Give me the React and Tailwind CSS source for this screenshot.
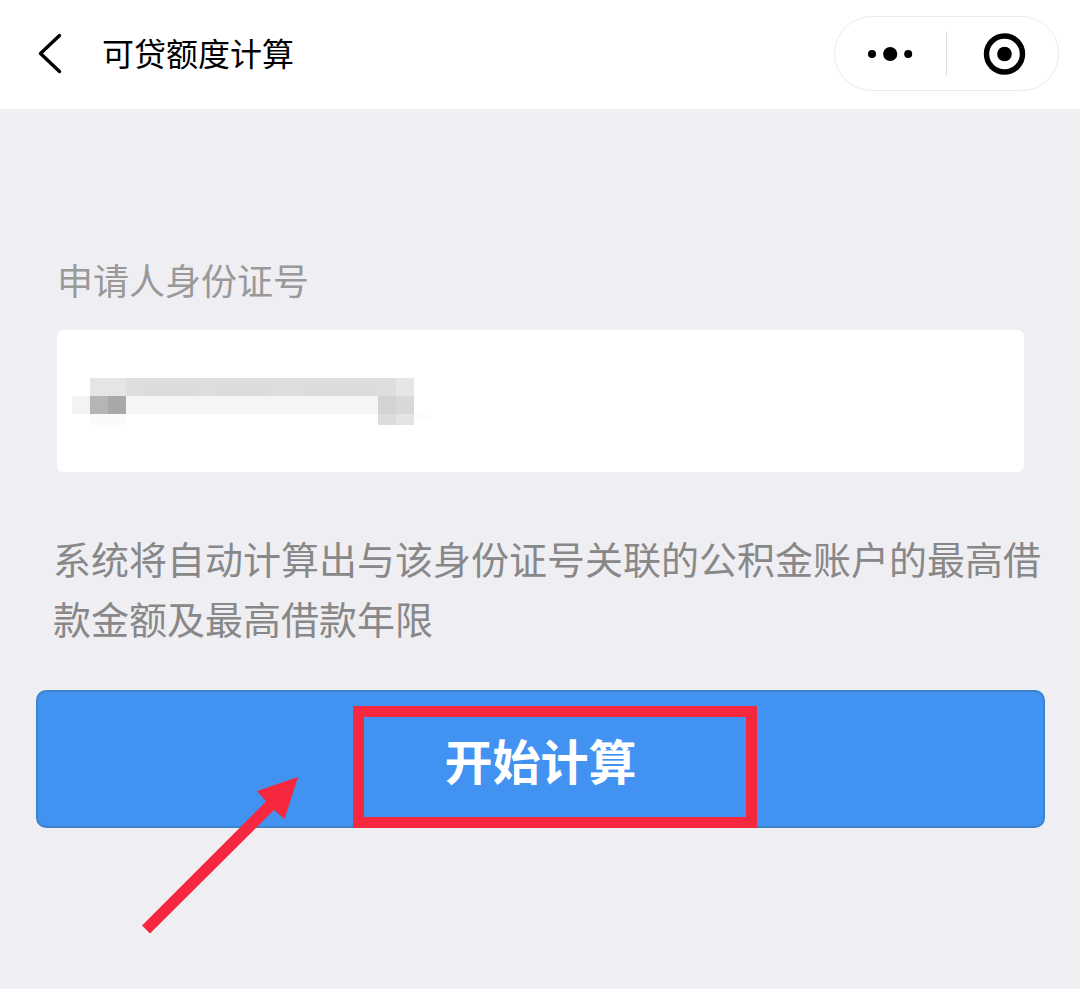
import React, { useState } from "react";

const NavBar = () => {
  return (
    <header className="flex items-center justify-between bg-white pl-9 pr-[21px] pt-4 pb-[18px]">
      <div className="flex items-center">
        <button type="button" aria-label="返回" className="mr-9">
          <svg width="30" height="44" viewBox="0 0 30 44" fill="none">
            <path d="M23.5 3.5 4.5 21.5l19 18" stroke="#000" strokeWidth="3.4" strokeLinecap="round" strokeLinejoin="round" />
          </svg>
        </button>
        <h1 className="pb-1 text-[32px] leading-10 text-black">可贷额度计算</h1>
      </div>

      {/* Mini program capsule */}
      <div className="flex h-[75px] w-[225px] items-center rounded-full border border-[#ebebeb]">
        <button type="button" aria-label="更多" className="flex flex-1 justify-center">
          <svg width="46" height="16" viewBox="0 0 46 16" fill="#000">
            <circle cx="4" cy="8" r="4" />
            <circle cx="22.2" cy="8" r="7.1" />
            <circle cx="40.2" cy="8" r="4" />
          </svg>
        </button>
        <span className="h-[45px] w-px bg-[#dedede]" />
        <button type="button" aria-label="关闭" className="flex flex-1 justify-center">
          <svg width="48" height="42" viewBox="0 0 48 42">
            <circle cx="25.5" cy="21" r="18" fill="none" stroke="#000" strokeWidth="5.4" />
            <circle cx="25.5" cy="21" r="7.3" fill="#000" />
          </svg>
        </button>
      </div>
    </header>
  );
};

// Pixelated cover that hides the id number
const Mosaic = () => {
  return (
    <svg className="pointer-events-none absolute left-[15px] top-12" width="360" height="48" viewBox="0 0 360 48" shapeRendering="crispEdges">
      <rect x="18" y="0" width="36" height="18" fill="#e5e5e5" />
      <rect x="54" y="0" width="270" height="18" fill="#dedede" />
      <rect x="72" y="6" width="54" height="12" fill="#dcdcdc" />
      <rect x="144" y="6" width="54" height="12" fill="#dcdcdc" />
      <rect x="231" y="6" width="75" height="12" fill="#dcdcdc" />
      <rect x="324" y="0" width="18" height="18" fill="#e6e6e6" />
      <rect x="0" y="18" width="18" height="18" fill="#f3f3f3" />
      <rect x="18" y="18" width="18" height="18" fill="#b5b5b5" />
      <rect x="36" y="18" width="18" height="18" fill="#a8a8a8" />
      <rect x="54" y="18" width="252" height="18" fill="#f5f5f5" />
      <rect x="306" y="18" width="18" height="18" fill="#d3d3d3" />
      <rect x="324" y="18" width="18" height="18" fill="#d8d8d8" />
      <rect x="18" y="36" width="36" height="11" fill="#fafafa" />
      <rect x="306" y="36" width="18" height="11" fill="#dcdcdc" />
      <rect x="324" y="36" width="18" height="11" fill="#e4e4e4" />
      <rect x="342" y="36" width="16" height="6" fill="#fcfcfc" />
    </svg>
  );
};

// Red frame and arrow drawn over the button
const Highlight = () => {
  return (
    <svg className="pointer-events-none absolute left-[104px] top-[14px]" width="620" height="232" viewBox="0 0 620 232" fill="none">
      <rect x="218.5" y="7.5" width="393" height="111" stroke="#f5283f" strokeWidth="11" />
      <path d="M2 221.5 126 97.5 117 87 158 73 144.5 115 134 106 10 229.5Z" fill="#f5283f" />
    </svg>
  );
};

const App = () => {
  const [idNumber, setIdNumber] = useState("");

  return (
    <div className="min-h-screen bg-[#efeef3] font-['Noto_Sans_CJK_SC',sans-serif]">
      <NavBar />
      <main className="pl-9 pr-[35px] pt-[143px]">
        <form onSubmit={(e) => e.preventDefault()}>
          <div className="px-[21px]">
            <label htmlFor="idNumber" className="block text-[36px] leading-[54px] text-[#999]">
              申请人身份证号
            </label>
            <div className="relative mt-6">
              <input
                id="idNumber"
                type="text"
                value={idNumber}
                onChange={(e) => setIdNumber(e.target.value)}
                className="block h-[142px] w-full rounded-md bg-white px-8 text-[36px] text-[#333] outline-none"
              />
              <Mosaic />
            </div>
          </div>

          <p className="mt-14 pl-[17px] text-[38px] leading-[60px] text-[#888]">
            系统将自动计算出与该身份证号关联的公积金账户的最高借款金额及最高借款年限
          </p>

          <div className="relative mt-[42px]">
            <button
              type="submit"
              className="block h-[138px] w-full rounded-[10px] border-2 border-[#3c83cc] bg-[#4292f2] text-[48px] font-bold text-white"
            >
              开始计算
            </button>
            <Highlight />
          </div>
        </form>
      </main>
    </div>
  );
};

export default App;
